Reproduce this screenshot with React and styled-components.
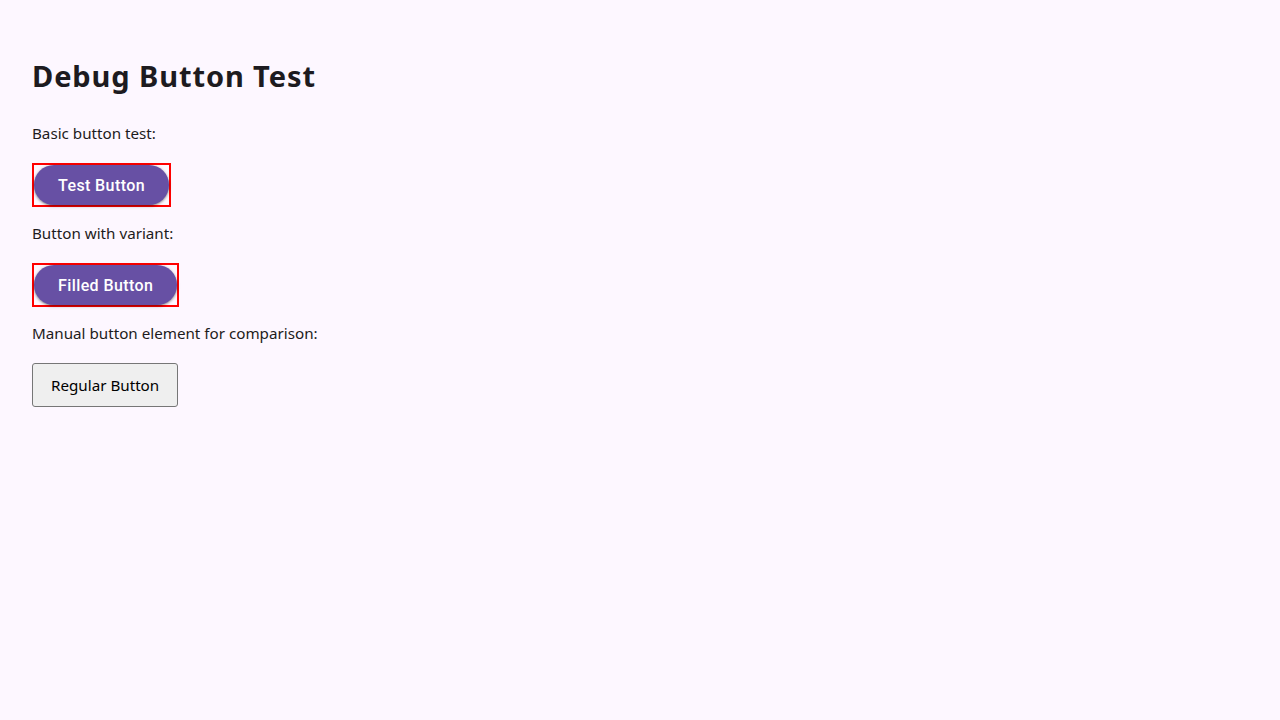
import styled, { createGlobalStyle } from "styled-components";

const GlobalStyle = createGlobalStyle`
  html, body {
    margin: 0;
    padding: 0;
    background: #fdf7ff;
  }
  body {
    font-family: "Noto Sans", "Lato", sans-serif;
    color: #1d1b20;
  }
`;

const Page = styled.div`
  padding: 56px 32px 32px;
  display: flex;
  flex-direction: column;
  align-items: flex-start;
`;

const Title = styled.h1`
  margin: 0 0 25px;
  font-size: 29px;
  font-weight: 700;
  letter-spacing: 0.9px;
  line-height: 40px;
`;

const Label = styled.p`
  margin: 0;
  font-size: 15.2px;
  line-height: 24px;
`;

const DebugFrame = styled.div`
  margin: 18px 0 14px;
  border: 2px solid #ff0000;
  display: flex;
`;

const FilledButton = styled.button`
  height: 40px;
  padding: 0 24px;
  border: none;
  border-radius: 20px;
  background: #6750a4;
  color: #ffffff;
  font-family: "Roboto", sans-serif;
  font-size: 16px;
  font-weight: 500;
  letter-spacing: 0.4px;
  cursor: pointer;
  box-shadow: 0 1px 3px 1px rgba(0, 0, 0, 0.15), 0 1px 2px rgba(0, 0, 0, 0.3);
`;

const RegularButton = styled.button`
  margin-top: 18px;
  height: 44px;
  padding: 0 18px;
  border: 1px solid #767676;
  border-radius: 3px;
  background: #efefef;
  color: #000000;
  font-family: "Noto Sans", "Lato", sans-serif;
  font-size: 15.2px;
`;

export default function App() {
  return (
    <>
      <GlobalStyle />
      <Page>
        <Title>Debug Button Test</Title>
        <Label>Basic button test:</Label>
        <DebugFrame>
          <FilledButton>Test Button</FilledButton>
        </DebugFrame>
        <Label>Button with variant:</Label>
        <DebugFrame>
          <FilledButton>Filled Button</FilledButton>
        </DebugFrame>
        <Label>Manual button element for comparison:</Label>
        <RegularButton>Regular Button</RegularButton>
      </Page>
    </>
  );
}
